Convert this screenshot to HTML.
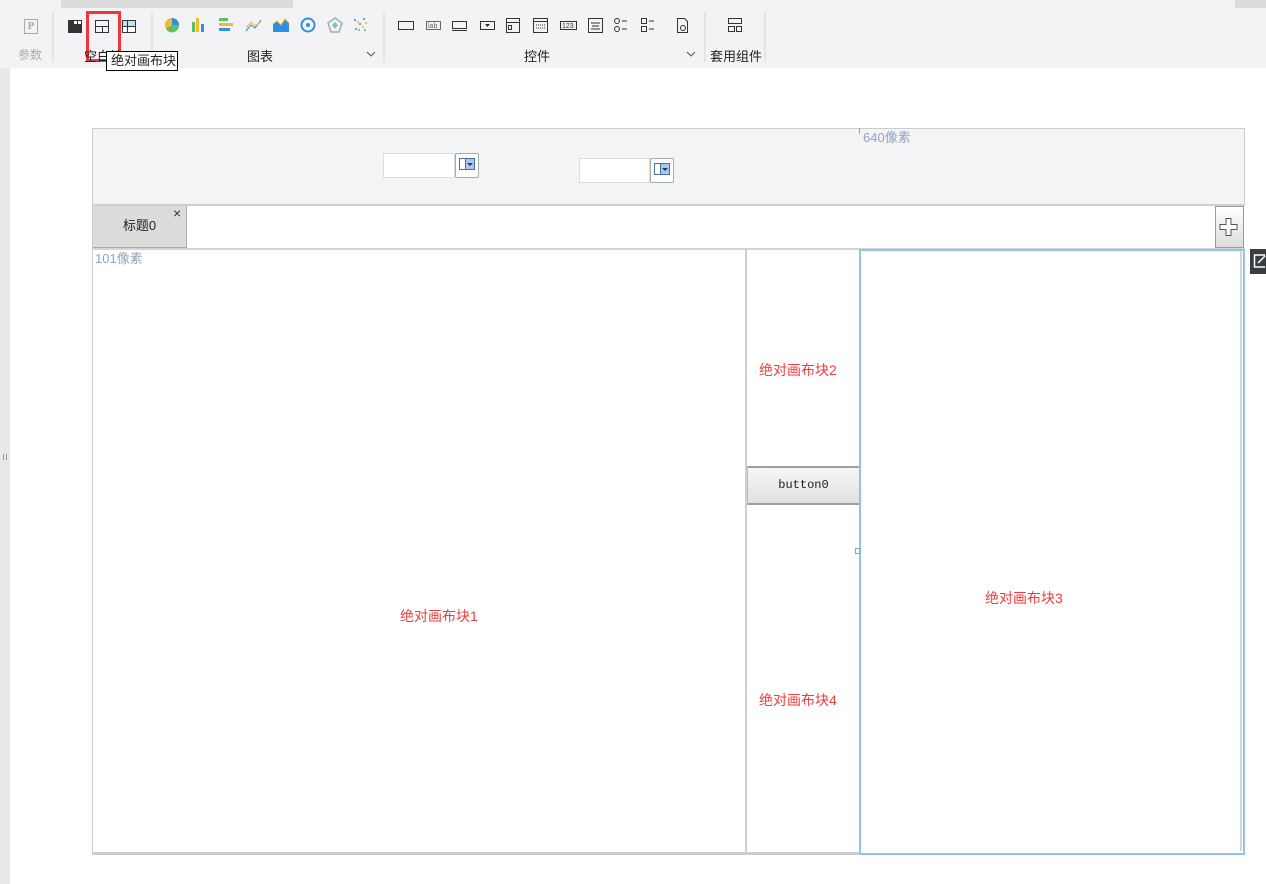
<!DOCTYPE html>
<html><head><meta charset="utf-8"><style>
*{margin:0;padding:0;box-sizing:border-box}
body{width:1266px;height:884px;position:relative;overflow:hidden;background:#fff;font-family:"Liberation Sans","Noto Sans CJK SC",sans-serif;font-size:12px;color:#222}
.a{position:absolute}
.red{color:#f03c3c;font-size:14px}
svg{position:absolute}
</style></head><body>
<div class="a" style="left:0;top:0;width:1266px;height:68px;background:#f3f3f5"></div>
<div class="a" style="left:61px;top:0;width:232px;height:8px;background:#dcdcdf"></div>
<div class="a" style="left:1235px;top:0;width:31px;height:8px;background:#dcdcdf"></div>
<div class="a" style="left:0;top:68px;width:10px;height:816px;background:#e8e8e8"></div>
<div class="a" style="left:3px;top:454px;width:1px;height:6px;background:#999"></div>
<div class="a" style="left:6px;top:454px;width:1px;height:6px;background:#999"></div>
<div class="a" style="left:52px;top:12px;width:2px;height:50px;background:#e6e4dc"></div>
<div class="a" style="left:151px;top:12px;width:2px;height:50px;background:#e6e4dc"></div>
<div class="a" style="left:383px;top:12px;width:2px;height:50px;background:#e6e4dc"></div>
<div class="a" style="left:704px;top:12px;width:2px;height:50px;background:#e6e4dc"></div>
<div class="a" style="left:764px;top:12px;width:2px;height:50px;background:#e6e4dc"></div>
<div class="a" style="left:24px;top:19px;width:14px;height:15px;border:1px solid #aaa;color:#aaa;font:bold 11px/13px 'Liberation Serif',serif;text-align:center">P</div>
<div class="a" style="left:18px;top:46px;color:#aaa">参数</div>
<div class="a" style="left:68px;top:20px;width:14px;height:13px;background:#333"></div>
<div class="a" style="left:74px;top:21px;width:3px;height:3px;background:#fff"></div>
<div class="a" style="left:78px;top:21px;width:3px;height:3px;background:#fff"></div>
<div class="a" style="left:95px;top:20px;width:14px;height:13px;border:1px solid #333"></div>
<div class="a" style="left:95px;top:26px;width:14px;height:1px;background:#333"></div>
<div class="a" style="left:102px;top:26px;width:1px;height:7px;background:#333"></div>
<div class="a" style="left:122px;top:20px;width:14px;height:13px;border:1px solid #333;background:linear-gradient(#bfe0f0 0 5px,#fff 5px)"></div>
<div class="a" style="left:127px;top:20px;width:1px;height:13px;background:#333"></div>
<div class="a" style="left:122px;top:26px;width:14px;height:1px;background:#333"></div>
<div class="a" style="left:86px;top:11px;width:35px;height:51px;border:3px solid #f0353a"></div>
<div class="a" style="left:84px;top:46px;font-size:13px">空白块</div>
<div class="a" style="left:106px;top:51px;width:72px;height:20px;border:1px solid #000;background:#fff;line-height:18px;padding-left:4px;font-size:13px">绝对画布块</div>
<svg style="left:163px;top:16px" width="215" height="20">
<circle cx="9" cy="9" r="7" fill="#f5b82e"/><path d="M9 9 L9 2 A7 7 0 0 1 16 9Z" fill="#2f8fe0"/><path d="M9 9 L16 9 A7 7 0 0 1 3 13Z" fill="#5cc05c"/>
<rect x="29" y="6" width="3" height="10" fill="#5cc05c"/><rect x="33" y="2" width="3" height="14" fill="#f5b82e"/><rect x="38" y="8" width="3" height="8" fill="#2f8fe0"/>
<rect x="56" y="2" width="9" height="3" fill="#5cc05c"/><rect x="56" y="7" width="14" height="3" fill="#f5b82e"/><rect x="56" y="12" width="11" height="3" fill="#2f8fe0"/>
<path d="M83 15 L88 9 L92 12 L98 4" stroke="#2f8fe0" fill="none"/><path d="M83 12 L88 6 L92 10 L98 6" stroke="#f5b82e" fill="none"/>
<path d="M110 16 L110 8 L114 5 L118 9 L122 3 L126 7 L126 16Z" fill="#2f8fe0"/><path d="M110 8 L114 5 L118 9 L122 3 L126 7" stroke="#f5b82e" fill="none"/>
<circle cx="145" cy="9" r="6.5" fill="none" stroke="#2f8fe0" stroke-width="2"/><circle cx="145" cy="9" r="2" fill="#2f8fe0"/>
<path d="M172 2 L179 7 L176 16 L168 16 L165 7Z" fill="none" stroke="#aaa" stroke-width="1.5"/><path d="M172 6 L175 9 L172 13 L169 9Z" fill="#6cc"/>
<g fill="#2f8fe0"><circle cx="192" cy="4" r="1"/><circle cx="197" cy="8" r="1"/><circle cx="201" cy="3" r="1"/><circle cx="193" cy="13" r="1"/></g>
<g fill="#f5b82e"><circle cx="195" cy="6" r="1"/><circle cx="200" cy="11" r="1"/><circle cx="203" cy="7" r="1"/></g>
<g fill="#5cc05c"><circle cx="196" cy="14" r="1"/><circle cx="202" cy="14" r="1"/></g>
</svg>
<div class="a" style="left:247px;top:46px;font-size:13px">图表</div>
<svg style="left:366px;top:51px" width="10" height="6" fill="none" stroke="#555"><path d="M1 1l4 4 4-4"/></svg>
<svg style="left:396px;top:16px" width="300" height="20" fill="none" stroke="#333">
<rect x="2.5" y="5.5" width="15" height="8"/>
<rect x="30.5" y="5.5" width="14" height="8" stroke="#666"/><text x="32" y="12" font-size="7" fill="#666" stroke="none" font-family="Liberation Sans">lab</text>
<rect x="56.5" y="5.5" width="14" height="7"/><line x1="56" y1="14.5" x2="71" y2="14.5"/>
<rect x="84.5" y="5.5" width="14" height="8"/><path d="M89 8 L94 8 L91.5 11Z" fill="#333" stroke="none"/>
<rect x="110.5" y="2.5" width="13" height="14"/><line x1="110" y1="6.5" x2="124" y2="6.5"/><rect x="112.5" y="9.5" width="3" height="4"/>
<rect x="137.5" y="2.5" width="14" height="14"/><line x1="137" y1="5.5" x2="152" y2="5.5"/><path d="M140 9h9M140 12h9" stroke-dasharray="1 1"/>
<rect x="164.5" y="5.5" width="16" height="8"/><text x="166" y="12" font-size="7" fill="#333" stroke="none" font-family="Liberation Sans">123</text>
<rect x="192.5" y="2.5" width="14" height="14"/><path d="M195 7h9M196 10h7M195 13h9"/>
<circle cx="221" cy="5" r="2.5"/><circle cx="221" cy="13" r="2.5"/><path d="M226 5h5M226 13h5"/>
<rect x="245.5" y="2.5" width="5" height="5"/><rect x="245.5" y="10.5" width="5" height="5"/><path d="M253 5h5M253 13h5"/>
<path d="M281.5 2.5 h7 l3 3 v11 h-10Z"/><circle cx="287" cy="12" r="2.5"/>
</svg>
<div class="a" style="left:524px;top:46px;font-size:13px">控件</div>
<svg style="left:686px;top:51px" width="10" height="6" fill="none" stroke="#555"><path d="M1 1l4 4 4-4"/></svg>
<svg style="left:727px;top:17px" width="16" height="16" fill="none" stroke="#333"><rect x="1.5" y="1.5" width="13" height="5"/><rect x="1.5" y="9.5" width="6" height="5"/><rect x="9.5" y="9.5" width="5" height="5"/></svg>
<div class="a" style="left:710px;top:46px;font-size:13px">套用组件</div>
<div class="a" style="left:92px;top:128px;width:1153px;height:78px;background:#f3f4f6;border:1px solid #ccc;border-bottom:2px solid #d0d0d0"></div>
<div class="a" style="left:859px;top:128px;width:1px;height:6px;background:#8aa"></div>
<div class="a" style="left:863px;top:127px;color:#8ea6c0;font-size:13px">640像素</div>
<div class="a" style="left:383px;top:153px;width:72px;height:25px;background:#fff;border:1px solid #ddd"></div>
<div class="a" style="left:455px;top:153px;width:24px;height:25px;background:#fff;border:1px solid #aaa;border-radius:2px"></div>
<div class="a" style="left:459px;top:158px;width:16px;height:12px;border:1px solid #4a6fa8;background:linear-gradient(90deg,#fff 5px,#4a6fa8 5px 6px,#a9c7ea 6px)"></div>
<svg class="a" style="left:466px;top:162px" width="8" height="5"><path d="M1 1h6L4 4Z" fill="#1a3a78"/></svg>
<div class="a" style="left:579px;top:158px;width:71px;height:25px;background:#fff;border:1px solid #ddd"></div>
<div class="a" style="left:650px;top:158px;width:24px;height:25px;background:#fff;border:1px solid #aaa;border-radius:2px"></div>
<div class="a" style="left:654px;top:163px;width:16px;height:12px;border:1px solid #4a6fa8;background:linear-gradient(90deg,#fff 5px,#4a6fa8 5px 6px,#a9c7ea 6px)"></div>
<svg class="a" style="left:661px;top:167px" width="8" height="5"><path d="M1 1h6L4 4Z" fill="#1a3a78"/></svg>
<div class="a" style="left:92px;top:206px;width:1153px;height:44px;background:#fff;border-left:1px solid #ccc;border-bottom:2px solid #d4d4d4"></div>
<div class="a" style="left:93px;top:206px;width:94px;height:42px;background:#dcdcdc;border-right:1px solid #aaa;border-bottom:1px solid #aaa;text-align:center;line-height:40px;font-size:13px">标题0</div>
<div class="a" style="left:173px;top:205px;font-size:14px;color:#333">×</div>
<div class="a" style="left:1215px;top:206px;width:29px;height:42px;border:1px solid #999;background:linear-gradient(#fff,#ddd)"></div>
<svg style="left:1218px;top:217px" width="22" height="20"><path d="M8 1.5h5v6h6v5h-6v6h-5v-6h-6v-5h6Z" fill="#fff" stroke="#555"/></svg>
<div class="a" style="left:92px;top:249px;width:655px;height:606px;border-left:1px solid #ccc;border-right:2px solid #d0d0d0;border-bottom:3px solid #ccc"></div>
<div class="a" style="left:95px;top:248px;color:#8ea6c0;font-size:13px">101像素</div>
<div class="a" style="left:747px;top:249px;width:113px;height:606px;border-bottom:3px solid #ccc"></div>
<div class="a" style="left:859px;top:249px;width:386px;height:606px;border:2px solid #90c2f2"></div>
<div class="a" style="left:1240px;top:251px;width:2px;height:600px;background:#d4d4d4"></div>
<div class="a" style="left:747px;top:466px;width:112px;height:39px;background:linear-gradient(#f7f7f7,#e0e0e0);border-top:2px solid #a0a0a0;border-bottom:2px solid #a0a0a0;border-left:1px solid #bbb;text-align:center;font-family:'Liberation Mono',monospace;font-size:12px;line-height:35px">button0</div>
<div class="a" style="left:855px;top:548px;width:5px;height:6px;border:1px solid #7aa7d8;background:#fff"></div>
<div class="a red" style="left:400px;top:606px">绝对画布块1</div>
<div class="a red" style="left:759px;top:360px">绝对画布块2</div>
<div class="a red" style="left:985px;top:588px">绝对画布块3</div>
<div class="a red" style="left:759px;top:690px">绝对画布块4</div>
<div class="a" style="left:1250px;top:249px;width:16px;height:25px;background:#3a3d40"></div>
<svg style="left:1253px;top:253px" width="13" height="16" fill="none" stroke="#fff" stroke-width="1.5"><path d="M12 2H1.5v12H12M5 10l7-7"/></svg>
</body></html>
